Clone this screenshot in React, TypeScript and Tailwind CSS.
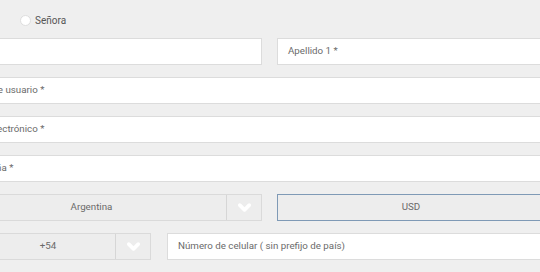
import { ChevronDown } from 'lucide-react';

function TextInput({ label, className = '', pad = 'pl-[10px]' }: { label?: string; className?: string; pad?: string }) {
  return (
    <div className={`h-[27px] bg-white border border-[#dcdcdc] flex items-center text-[9.75px] text-[#6a6a6a] ${pad} ${className}`}>
      {label}
    </div>
  );
}

function Select({ value, className = '', pad = '' }: { value: string; className?: string; pad?: string }) {
  return (
    <div className={`h-[27px] bg-[#ededed] border border-[#dadada] flex ${className}`}>
      <div className={`flex-1 flex items-center justify-center text-[9.75px] text-[#6a6a6a] ${pad}`}>{value}</div>
      <div className="w-[35px] border-l border-[#d6d6d6] flex items-center justify-center">
        <ChevronDown className="w-[19px] h-[19px] text-white" strokeWidth={4.5} />
      </div>
    </div>
  );
}

export default function App() {
  return (
    <div className="w-[540px] h-[272px] overflow-hidden bg-[#efefef]" style={{ fontFamily: 'Roboto, "Liberation Sans", sans-serif' }}>
      <div className="-ml-[60px] w-[660px] pt-[15px] flex flex-col gap-[12px]">
        <div className="h-[11px] flex items-center pl-[80px] gap-[4px]">
          <span className="w-[11px] h-[11px] rounded-full bg-white border border-[#dedede]" />
          <span className="text-[10px] text-[#555]">Señora</span>
        </div>
        <div className="flex gap-[15px]">
          <TextInput className="w-[322px]" />
          <TextInput className="flex-1" label="Apellido 1 *" />
        </div>
        <TextInput label="Nombre de usuario *" pad="pl-[14px]" />
        <TextInput label="Correo electrónico *" pad="pl-[17px]" />
        <TextInput label="Contraseña *" pad="pl-[16px]" />
        <div className="flex gap-[15px]">
          <Select value="Argentina" className="w-[322px]" pad="pl-[16px]" />
          <div className="w-[268px] h-[27px] bg-[#ededed] border-[1.5px] border-[#7f9ab6] flex items-center justify-center text-[9.75px] text-[#6a6a6a]">
            USD
          </div>
        </div>
        <div className="flex gap-[16px]">
          <Select value="+54" className="w-[211px]" pad="pl-[40px]" />
          <TextInput className="flex-1" label="Número de celular ( sin prefijo de país)" />
        </div>
      </div>
    </div>
  );
}
